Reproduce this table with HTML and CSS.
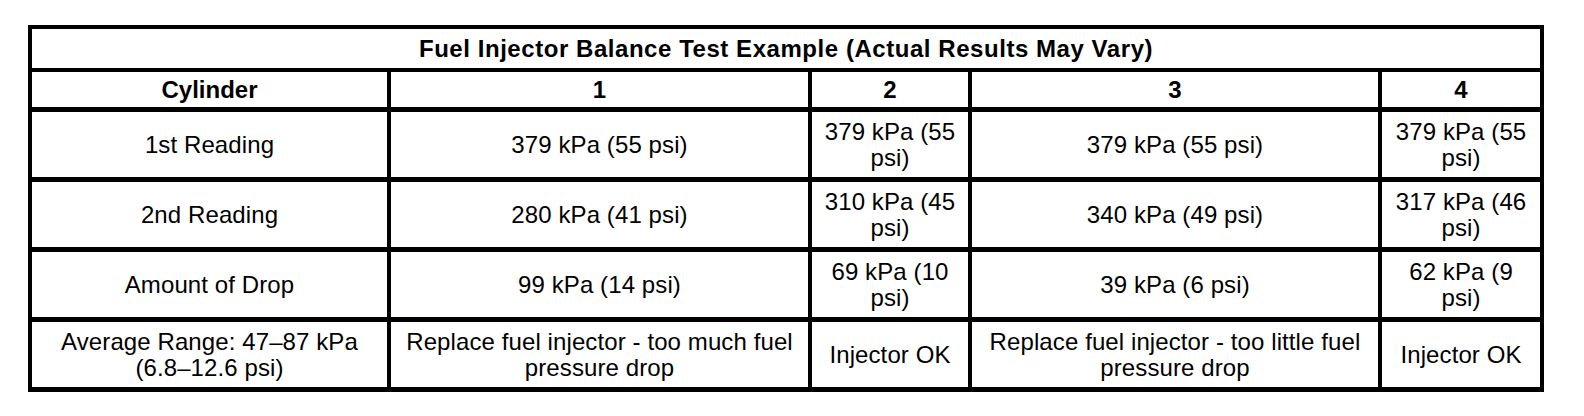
FILE: index.html
```html
<!DOCTYPE html>
<html lang="en">
<head>
<meta charset="utf-8">
<title>Fuel Injector Balance Test Example</title>
<link rel="stylesheet" href="styles.css">
</head>
<body>
<table class="balance">
  <colgroup>
    <col class="c-label">
    <col class="c-one">
    <col class="c-two">
    <col class="c-three">
    <col class="c-four">
  </colgroup>
  <thead>
    <tr class="r-title">
      <th colspan="5" class="title">Fuel Injector Balance Test Example (Actual Results May Vary)</th>
    </tr>
    <tr class="r-head">
      <th>Cylinder</th>
      <th>1</th>
      <th>2</th>
      <th>3</th>
      <th>4</th>
    </tr>
  </thead>
  <tbody>
    <tr class="r-data">
      <td>1st Reading</td>
      <td>379 kPa (55 psi)</td>
      <td>379 kPa (55 psi)</td>
      <td>379 kPa (55 psi)</td>
      <td>379 kPa (55 psi)</td>
    </tr>
    <tr class="r-data">
      <td>2nd Reading</td>
      <td>280 kPa (41 psi)</td>
      <td>310 kPa (45 psi)</td>
      <td>340 kPa (49 psi)</td>
      <td>317 kPa (46 psi)</td>
    </tr>
    <tr class="r-data">
      <td>Amount of Drop</td>
      <td>99 kPa (14 psi)</td>
      <td>69 kPa (10 psi)</td>
      <td>39 kPa (6 psi)</td>
      <td>62 kPa (9 psi)</td>
    </tr>
    <tr class="r-data">
      <td>Average Range: 47–87 kPa (6.8–12.6 psi)</td>
      <td>Replace fuel injector - too much fuel pressure drop</td>
      <td>Injector OK</td>
      <td>Replace fuel injector - too little fuel pressure drop</td>
      <td>Injector OK</td>
    </tr>
  </tbody>
</table>
</body>
</html>
```

FILE: styles.css
```css
html, body {
  margin: 0;
  padding: 0;
  background: #ffffff;
}

body {
  font-family: "Liberation Sans", Arial, sans-serif;
  color: #000000;
}

.balance {
  margin: 25px 0 0 28px;
  width: 1516px;
  table-layout: fixed;
  border-collapse: separate;
  border-spacing: 0;
  border-top: 4px solid #000;
  border-left: 4px solid #000;
}

.c-label { width: 359px; }
.c-one { width: 421px; }
.c-two { width: 160px; }
.c-three { width: 410px; }
.c-four { width: 162px; }

.balance th,
.balance td {
  box-sizing: border-box;
  padding: 0 6px;
  border-right: 4px solid #000;
  border-bottom: 5px solid #000;
  text-align: center;
  vertical-align: middle;
  font-size: 24px;
  line-height: 26px;
}

.balance th {
  font-weight: bold;
}

.balance td {
  font-weight: normal;
  letter-spacing: 0.1px;
}

.balance .title {
  border-bottom-width: 4px;
  letter-spacing: 0.55px;
}

.r-title { height: 43px; }
.r-head { height: 40px; }
.r-data { height: 70px; }
```
